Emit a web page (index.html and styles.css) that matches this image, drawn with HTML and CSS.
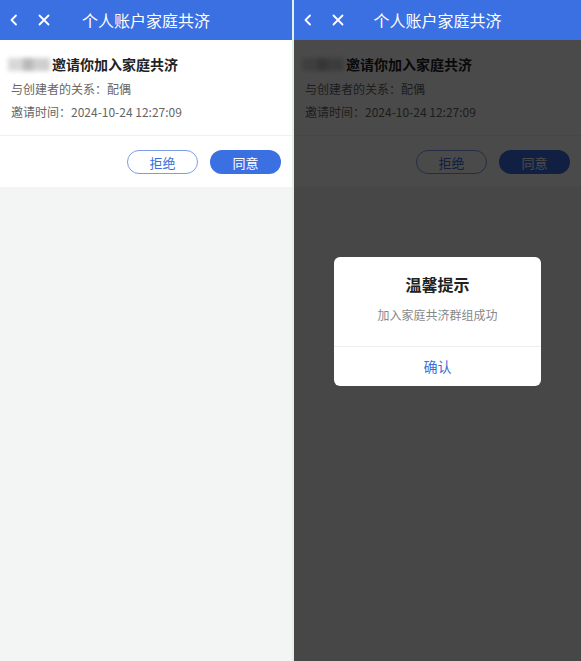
FILE: index.html
```html
<!DOCTYPE html>
<html lang="zh-CN">
<head>
  <meta charset="UTF-8" />
  <title>个人账户家庭共济</title>
  <link rel="stylesheet" href="styles.css">
</head>
<body>
  <div class="screens">

    <!-- Linker Bildschirm: Einladung -->
    <div class="phone phone-left">
      <header class="topbar">
        <span class="nav-icons">
          <svg class="icon" width="10" height="12" viewBox="0 0 10 12"><path d="M7 1.5 L2.5 6 L7 10.5" fill="none" stroke="#fff" stroke-width="1.8" stroke-linecap="round" stroke-linejoin="round"/></svg>
          <svg class="icon" width="12" height="12" viewBox="0 0 12 12"><path d="M1.5 1.5 L10.5 10.5 M10.5 1.5 L1.5 10.5" fill="none" stroke="#fff" stroke-width="1.8" stroke-linecap="round"/></svg>
        </span>
        <span class="title">个人账户家庭共济</span>
      </header>
      <div class="page">
        <section class="card">
          <div class="info">
            <div class="invite"><span class="blurname"></span>邀请你加入家庭共济</div>
            <div class="meta">与创建者的关系：配偶</div>
            <div class="meta">邀请时间：2024-10-24 12:27:09</div>
          </div>
          <div class="actions">
            <button class="btn btn-outline">拒绝</button>
            <button class="btn btn-primary">同意</button>
          </div>
        </section>
      </div>
    </div>

    <!-- Rechter Bildschirm: mit Dialog -->
    <div class="phone phone-right">
      <header class="topbar">
        <span class="nav-icons">
          <svg class="icon" width="10" height="12" viewBox="0 0 10 12"><path d="M7 1.5 L2.5 6 L7 10.5" fill="none" stroke="#fff" stroke-width="1.8" stroke-linecap="round" stroke-linejoin="round"/></svg>
          <svg class="icon" width="12" height="12" viewBox="0 0 12 12"><path d="M1.5 1.5 L10.5 10.5 M10.5 1.5 L1.5 10.5" fill="none" stroke="#fff" stroke-width="1.8" stroke-linecap="round"/></svg>
        </span>
        <span class="title">个人账户家庭共济</span>
      </header>
      <div class="page">
        <section class="card">
          <div class="info">
            <div class="invite"><span class="blurname"></span>邀请你加入家庭共济</div>
            <div class="meta">与创建者的关系：配偶</div>
            <div class="meta">邀请时间：2024-10-24 12:27:09</div>
          </div>
          <div class="actions">
            <button class="btn btn-outline">拒绝</button>
            <button class="btn btn-primary">同意</button>
          </div>
        </section>
        <div class="mask">
          <div class="dialog">
            <div class="dialog-body">
              <div class="dialog-title">温馨提示</div>
              <div class="dialog-text">加入家庭共济群组成功</div>
            </div>
            <div class="dialog-btn">确认</div>
          </div>
        </div>
      </div>
    </div>

  </div>
</body>
</html>
```

FILE: styles.css
```css
html, body {
  margin: 0;
  padding: 0;
  height: 100%;
}
body {
  font-family: "Noto Sans CJK SC", "Noto Sans", sans-serif;
  background: #e3f0e6;
}
.screens {
  display: flex;
  gap: 2px;
  height: 661px;
  width: 581px;
}
.phone {
  display: flex;
  flex-direction: column;
  height: 100%;
  background: #f3f5f4;
}
.phone-left { width: 292px; }
.phone-right { width: 287px; }

/* Kopfzeile */
.topbar {
  position: relative;
  height: 40px;
  flex-shrink: 0;
  background: #3b70e3;
  color: #fff;
  display: flex;
  align-items: center;
  justify-content: center;
}
.nav-icons {
  position: absolute;
  left: 9px;
  top: 14px;
  display: flex;
  gap: 19px;
  align-items: center;
}
.icon { display: block; }
.title {
  font-size: 16px;
  letter-spacing: 0;
}

.page {
  position: relative;
  flex: 1;
}

/* Karte mit Einladung */
.card {
  background: #fff;
}
.info {
  padding: 13px 11px 12px;
  border-bottom: 1px solid #f0f0f0;
}
.invite {
  display: flex;
  align-items: center;
  font-size: 14px;
  font-weight: 700;
  color: #222;
  line-height: 22px;
  margin-bottom: 2px;
}
.blurname {
  display: inline-block;
  width: 42px;
  height: 13px;
  margin-left: -3px;
  margin-right: 2px;
  background: linear-gradient(90deg, #d8d8d8 0 35%, #b9b9b9 35% 60%, #cfcfcf 60% 100%);
  filter: blur(2px);
}
.meta {
  font-size: 12px;
  color: #666;
  line-height: 23px;
}
.actions {
  display: flex;
  justify-content: flex-end;
  gap: 12px;
  padding: 14px 11px 13px;
}
.btn {
  width: 71px;
  height: 24px;
  border-radius: 12px;
  font-family: inherit;
  font-size: 13px;
  padding: 0;
  cursor: pointer;
}
.btn-outline {
  background: #fff;
  color: #3b6fd9;
  border: 1px solid #7a9de6;
}
.btn-primary {
  background: #3b70e3;
  color: #fff;
  border: none;
}

/* Overlay und Dialog */
.mask {
  position: absolute;
  inset: 0;
  background: rgba(0, 0, 0, 0.71);
  display: flex;
  justify-content: center;
  align-items: flex-start;
}
.dialog {
  margin-top: 217px;
  width: 207px;
  background: #fff;
  border-radius: 6px;
  overflow: hidden;
}
.dialog-body {
  padding: 16px 10px 22px;
  text-align: center;
  border-bottom: 1px solid #eee;
}
.dialog-title {
  font-size: 16px;
  font-weight: 700;
  color: #222;
  line-height: 22px;
}
.dialog-text {
  margin-top: 11px;
  font-size: 12px;
  color: #888;
  line-height: 18px;
}
.dialog-btn {
  text-align: center;
  font-size: 14px;
  color: #3b6fd9;
  line-height: 39px;
}
```
